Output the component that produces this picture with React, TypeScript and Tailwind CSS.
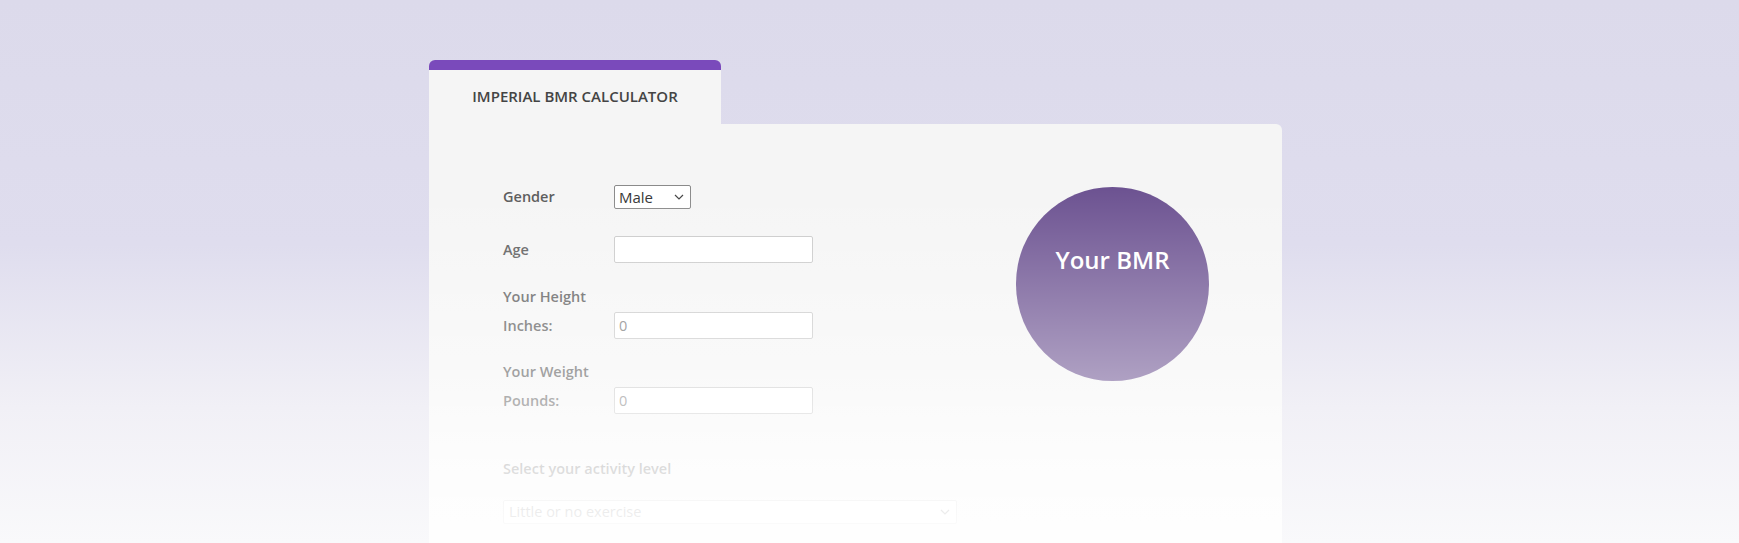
import React from 'react';

const font = { fontFamily: '"Open Sans", "Noto Sans", sans-serif' };

function Chevron({ className }: { className?: string }) {
    return (
        <svg className={className} width="10" height="6" viewBox="0 0 10 6" fill="none">
            <path d="M1 1l4 4 4-4" stroke="currentColor" strokeWidth="1.2" />
        </svg>
    );
}

function Field({ label, value }: { label: string; value?: string }) {
    return (
        <div className="flex items-center">
            <span className="w-[111px] text-[14.5px] font-semibold text-[#5a5a5a]">{label}</span>
            <input
                readOnly
                defaultValue={value}
                className="h-[27px] w-[199px] rounded-[2px] border border-[#c9c9c9] bg-white px-[4px] text-[14.5px] text-[#777] outline-none"
            />
        </div>
    );
}

export default function App() {
    return (
        <div className="min-h-[543px] h-[543px] overflow-hidden bg-[linear-gradient(to_bottom,#dcdaeb_0%,#dfddee_45%,#f1f0f6_75%,#f9f9fb_100%)]" style={font}>
            <div className="ml-[429px] w-[853px] pt-[60px]">
                {/* Tab */}
                <div className="flex h-[64px] w-[292px] items-center justify-center rounded-t-[6px] border-t-[10px] border-[#7a4abb] bg-[#f5f5f5]">
                    <span className="mt-[-1px] text-[15px] font-semibold text-[#444]">IMPERIAL BMR CALCULATOR</span>
                </div>

                {/* Card */}
                <div className="relative h-[419px] rounded-tr-[6px] bg-[#f5f5f5]">
                    <div className="flex pl-[74px] pt-[61px]">
                        {/* Form */}
                        <div className="flex w-[454px] flex-col">
                            <div className="flex h-[24px] items-center">
                                <span className="w-[111px] text-[14.5px] font-semibold text-[#5a5a5a]">Gender</span>
                                <div className="flex h-[24px] w-[77px] items-center justify-between rounded-[2px] border border-[#8a8a8a] bg-white pl-[4px] pr-[6px]">
                                    <span className="text-[15px] text-[#333]">Male</span>
                                    <Chevron className="text-[#444]" />
                                </div>
                            </div>

                            <div className="mt-[27px]">
                                <Field label="Age" />
                            </div>

                            <div className="mt-[24px] h-[20px] text-[14.5px] font-semibold leading-[20px] text-[#5a5a5a]">Your Height</div>
                            <div className="mt-[5px]">
                                <Field label="Inches:" value="0" />
                            </div>

                            <div className="mt-[23px] h-[20px] text-[14.5px] font-semibold leading-[20px] text-[#5a5a5a]">Your Weight</div>
                            <div className="mt-[5px]">
                                <Field label="Pounds:" value="0" />
                            </div>

                            <div className="mt-[45px] h-[20px] text-[14.5px] font-semibold leading-[20px] text-[#5a5a5a]">Select your activity level</div>
                            <div className="mt-[21px] flex h-[24px] w-[454px] items-center justify-between rounded-[2px] border border-[#c9c9c9] bg-white pl-[5px] pr-[6px]">
                                <span className="text-[14.5px] text-[#666]">Little or no exercise</span>
                                <Chevron className="text-[#666]" />
                            </div>
                        </div>

                        {/* Result */}
                        <div className="ml-[59px] mt-[2px] flex h-[194px] w-[193px] justify-center rounded-full bg-[#6c5291]">
                            <span className="mt-[55px] text-[24px] font-semibold text-white">Your BMR</span>
                        </div>
                    </div>

                    {/* fade to white */}
                    <div className="pointer-events-none absolute inset-0 bg-[linear-gradient(to_bottom,rgba(255,255,255,0)_15%,rgba(255,255,255,0.45)_61%,rgba(255,255,255,0.8)_83%,rgba(255,255,255,0.94)_100%)]" />
                </div>
            </div>
        </div>
    );
}
